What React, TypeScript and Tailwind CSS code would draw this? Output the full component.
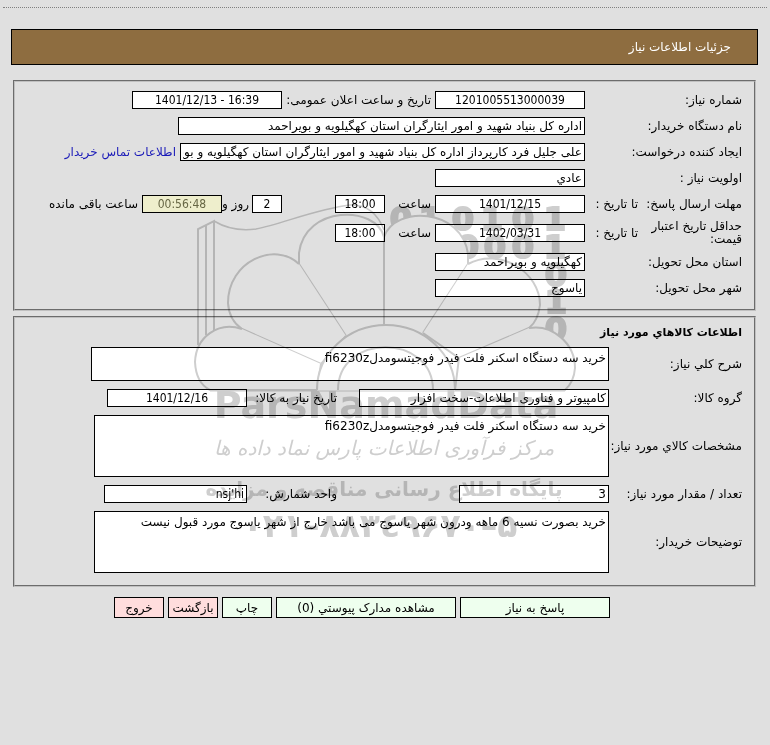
import type { ComponentProps, ReactNode } from "react"
import { clsx } from "clsx"

type FieldProps = ComponentProps<"input"> & { numeric?: boolean }

function Field({ numeric, className, ...props }: FieldProps) {
  return (
    <input
      readOnly
      className={clsx(
        "h-[18px] shrink-0 border border-black px-0.5",
        numeric && "text-center font-['DejaVu_Sans_Condensed','DejaVu_Sans',sans-serif]",
        className,
      )}
      {...props}
    />
  )
}

function Area({ className, ...props }: ComponentProps<"textarea">) {
  return (
    <textarea
      readOnly
      className={clsx("block shrink-0 resize-none overflow-hidden border border-black bg-white px-0.5 py-1 leading-3", className)}
      {...props}
    />
  )
}

function Row({ label, htmlFor, children }: { label: ReactNode; htmlFor: string; children: ReactNode }) {
  return (
    <div className="flex min-h-5 items-center">
      <label htmlFor={htmlFor} className="w-[157px] shrink-0 leading-[13px]">
        {label}
      </label>
      {children}
    </div>
  )
}

function GoodsRow({ label, htmlFor, children }: { label: string; htmlFor: string; children: ReactNode }) {
  return (
    <div className="flex items-center">
      <label htmlFor={htmlFor} className="w-[133px] shrink-0 whitespace-nowrap">
        {label}
      </label>
      {children}
    </div>
  )
}

function Action({ className, children }: { className: string; children: ReactNode }) {
  return (
    <button type="button" className={clsx("h-[21px] overflow-hidden border border-black whitespace-nowrap", className)}>
      {children}
    </button>
  )
}

// white parts vanish under multiply, so the petals can hide the digits behind them
function Watermark() {
  return (
    <svg
      viewBox="190 190 390 370"
      width="390"
      height="370"
      className="pointer-events-none absolute top-[190px] left-[190px] mix-blend-multiply"
      aria-hidden="true"
    >
      <g
        fill="#cecece"
        stroke="#cecece"
        strokeWidth="2"
        fontSize="32"
        textAnchor="middle"
        direction="ltr"
        className="font-['DejaVu_Sans'] font-bold"
      >
        <text x="401 430 463 492 523 555" y="230">010101</text>
        <text x="468 495 523 555" y="258">0001</text>
        <text x="556" y="286">0</text>
        <text x="556" y="313">1</text>
        <text x="556" y="340">0</text>
      </g>
      <g fill="#fff" stroke="#cecece" strokeWidth="2">
        <path d="M198 345V229l16-8V333M206 335V225" fill="none" />
        <path d="M214 221q18 11 42 8c26-5 60-20 94-24q24-1 34 25" fill="none" strokeWidth="1.500" />
        <path d="M384 325V237C376 205 305 205 299 253V264L346 336" />
        <path d="M299 264C275 241 228 261 228 303Q229 320 242 329L321 364L346 336" />
        <path d="M242 329C218 321 196 337 195 362Q196 383 210 390H317L321 364" />
        <path d="M384 325V237C395 205 462 208 468 254V264L423 333" />
        <path d="M468 264C500 247 540 272 540 305Q538 321 529 328L459 358L423 333" />
        <path d="M529 328C552 324 575 343 575 368Q574 382 565 390H455L459 358" />
        <path d="M317 391A69 65 0 0 1 455 391" stroke="none" />
        <path d="M317 390A69 65 0 0 1 455 390M338 390C338 333 433 333 433 390" />
        <path d="M210 391H565" strokeWidth="1" />
      </g>
      <g fill="#cecece" textAnchor="middle" direction="rtl" className="font-['DejaVu_Sans']">
        <text x="386" y="418" fontSize="38" direction="ltr" className="font-bold">ParsNamadData</text>
        <text x="384" y="455" fontSize="20" className="italic">مرکز فرآوری اطلاعات پارس نماد داده ها</text>
        <text x="384" y="496" fontSize="20" className="font-bold">پایگاه اطلاع رسانی مناقصه و مزایده</text>
        <text x="380" y="537" fontSize="33" direction="ltr" className="font-bold">۰۲۱–۸۸۳٤۹۶۷۰–۵</text>
      </g>
    </svg>
  )
}

export default function App() {
  return (
    <main
      dir="rtl"
      className="relative min-h-screen bg-[#e0e0e0] px-[3px] pt-[7px] font-['DejaVu_Sans',sans-serif] text-[12px] leading-4 text-black"
    >
      <div className="border-t border-dotted border-[#808080]" />

      <header className="mt-[21px] mr-[9px] ml-2 flex h-9 items-center border border-black bg-[#8e6d40] px-[26px] text-white">
        <h1>جزئیات اطلاعات نیاز</h1>
      </header>

      <form className="mt-[15px] mr-[11px] ml-2.5">
        <fieldset className="flex flex-col gap-1.5 border-2 border-[#c0c0c0] px-3 pt-2 pb-[11px] [border-style:groove]">
          <Row label="شماره نیاز:" htmlFor="number">
            <Field id="number" numeric className="w-[150px] bg-white" defaultValue="1201005513000039" />
            <label htmlFor="announced" className="w-[153px] shrink-0 pr-1 whitespace-nowrap">
              تاریخ و ساعت اعلان عمومی:
            </label>
            <Field id="announced" numeric dir="ltr" className="w-[150px] bg-white" defaultValue="1401/12/13 - 16:39" />
          </Row>
          <Row label="نام دستگاه خریدار:" htmlFor="buyer">
            <Field
              id="buyer"
              className="w-[407px] bg-white"
              defaultValue="اداره کل بنیاد شهید و امور ایثارگران استان کهگیلویه و بویراحمد"
            />
          </Row>
          <Row label="ایجاد کننده درخواست:" htmlFor="creator">
            <Field
              id="creator"
              className="w-[405px] bg-white"
              defaultValue="علی جلیل فرد کارپرداز اداره کل بنیاد شهید و امور ایثارگران استان کهگیلویه و بویراحمد"
            />
            <a href="#contact" className="mr-1 whitespace-nowrap text-[#1a1ab8]">
              اطلاعات تماس خریدار
            </a>
          </Row>
          <Row label="اولویت نیاز :" htmlFor="priority">
            <Field id="priority" className="w-[150px] bg-white" defaultValue="عادي" />
          </Row>
          <Row
            label={
              <span className="flex whitespace-nowrap">
                <span className="w-[104px]">مهلت ارسال پاسخ:</span>
                <span>تا تاریخ :</span>
              </span>
            }
            htmlFor="deadline"
          >
            <Field id="deadline" numeric className="w-[150px] bg-white" defaultValue="1401/12/15" />
            <label htmlFor="deadlineHour" className="w-[50px] shrink-0 pr-1">
              ساعت
            </label>
            <Field id="deadlineHour" numeric className="w-[50px] bg-white" defaultValue="18:00" />
            <Field id="days" numeric className="mr-[53px] w-[30px] bg-white" defaultValue="2" />
            <label htmlFor="days" className="w-[30px] shrink-0 pr-[3px] whitespace-nowrap">
              روز و
            </label>
            <Field
              id="remaining"
              numeric
              className="w-20 bg-[#eeeecc] text-[#666644]"
              defaultValue="00:56:48"
            />
            <label htmlFor="remaining" className="pr-1 whitespace-nowrap">
              ساعت باقی مانده
            </label>
          </Row>
          <Row
            label={
              <span className="flex items-center">
                <span className="w-[104px] pl-2">حداقل تاریخ اعتبار قیمت:</span>
                <span className="whitespace-nowrap">تا تاریخ :</span>
              </span>
            }
            htmlFor="validity"
          >
            <Field id="validity" numeric className="w-[150px] bg-white" defaultValue="1402/03/31" />
            <label htmlFor="validityHour" className="w-[50px] shrink-0 pr-1">
              ساعت
            </label>
            <Field id="validityHour" numeric className="w-[50px] bg-white" defaultValue="18:00" />
          </Row>
          <Row label="استان محل تحویل:" htmlFor="province">
            <Field id="province" className="w-[150px] bg-white" defaultValue="کهگیلویه و بویراحمد" />
          </Row>
          <Row label="شهر محل تحویل:" htmlFor="city">
            <Field id="city" className="w-[150px] bg-white" defaultValue="یاسوج" />
          </Row>
        </fieldset>

        <fieldset className="mt-[5px] flex flex-col gap-2 border-2 border-[#c0c0c0] px-3 pt-1.5 pb-3 [border-style:groove]">
          <h2 className="-mb-1 h-[19px] text-[11px] leading-[18px] font-bold">اطلاعات کالاهاي مورد نیاز</h2>
          <GoodsRow label="شرح کلي نیاز:" htmlFor="summary">
            <Area id="summary" className="h-[34px] w-[518px]" defaultValue="خرید سه دستگاه اسکنر فلت فیدر فوجیتسومدلfi6230z" />
          </GoodsRow>
          <GoodsRow label="گروه کالا:" htmlFor="group">
            <Field id="group" className="w-[250px] bg-white" defaultValue="کامپیوتر و فناوری اطلاعات-سخت افزار" />
            <label htmlFor="needDate" className="mr-[22px] w-[90px] shrink-0 whitespace-nowrap">
              تاریخ نیاز به کالا:
            </label>
            <Field id="needDate" numeric className="w-[140px] bg-white" defaultValue="1401/12/16" />
          </GoodsRow>
          <GoodsRow label="مشخصات کالاي مورد نیاز:" htmlFor="specs">
            <Area id="specs" className="h-[62px] w-[515px]" defaultValue="خرید سه دستگاه اسکنر فلت فیدر فوجیتسومدلfi6230z" />
          </GoodsRow>
          <GoodsRow label="تعداد / مقدار مورد نیاز:" htmlFor="amount">
            <Field id="amount" className="w-[150px] bg-white" defaultValue="3" />
            <label htmlFor="unit" className="mr-[122px] w-[90px] shrink-0 whitespace-nowrap">
              واحد شمارش:
            </label>
            <Field
              id="unit"
              className="w-[143px] bg-white font-['DejaVu_Sans_Condensed','DejaVu_Sans',sans-serif]"
              defaultValue="nsj'hi"
            />
          </GoodsRow>
          <GoodsRow label="توضیحات خریدار:" htmlFor="notes">
            <Area
              id="notes"
              className="h-[62px] w-[515px]"
              defaultValue="خرید بصورت نسیه 6 ماهه ودرون شهر یاسوج می باشد خارج از شهر یاسوج مورد قبول نیست"
            />
          </GoodsRow>
        </fieldset>

        <div className="mt-2.5 flex gap-1 pr-[146px]">
          <Action className="w-[150px] bg-[#eeffee]">پاسخ به نیاز</Action>
          <Action className="w-[180px] bg-[#eeffee]">مشاهده مدارک پیوستي (0)</Action>
          <Action className="w-[50px] bg-[#eeffee]">چاپ</Action>
          <Action className="w-[50px] bg-[#ffdddd]">بازگشت</Action>
          <Action className="w-[50px] bg-[#ffdddd]">خروج</Action>
        </div>
      </form>

      <Watermark />
    </main>
  )
}
